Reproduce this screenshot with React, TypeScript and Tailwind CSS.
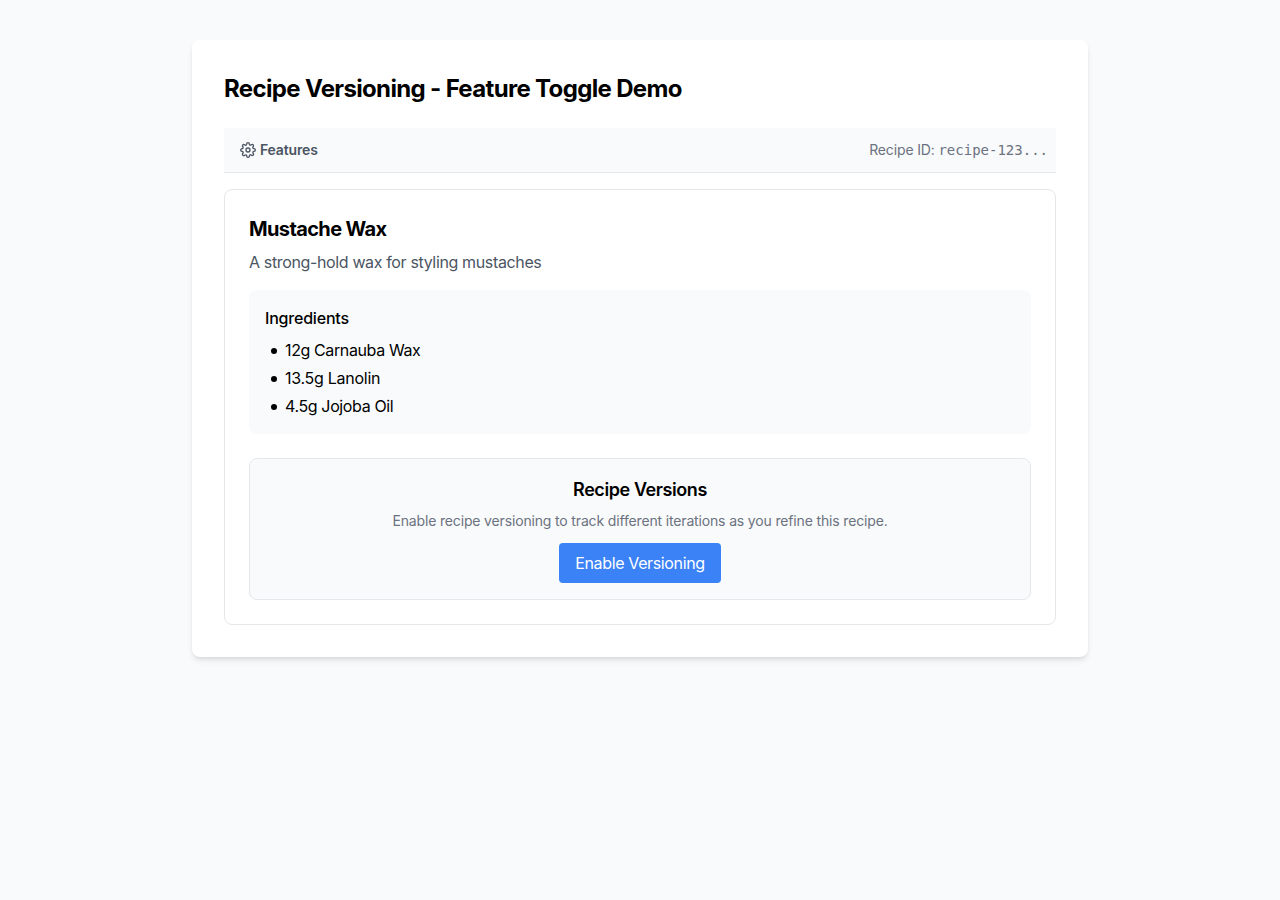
import { FiSettings } from "react-icons/fi";

const ingredients = [
  { text: "12g Carnauba Wax", tracking: "tracking-[-0.38px]" },
  { text: "13.5g Lanolin", tracking: "tracking-[-0.27px]" },
  { text: "4.5g Jojoba Oil", tracking: "tracking-[-0.37px]" },
];

export default function App() {
  return (
    <div className="min-h-screen bg-[#f9fafb] px-4 py-10 font-['Inter',sans-serif] text-black antialiased">
      <main className="mx-auto w-[896px] rounded-lg bg-white p-8 shadow-md">
        <h1 className="mb-[23px] pt-px text-2xl font-bold tracking-[-0.66px]">Recipe Versioning - Feature Toggle Demo</h1>
        <div className="mb-4 flex h-[45px] items-center justify-between border-b border-[#e5e7eb] bg-[#f9fafb] pr-2 pl-4 text-sm">
          <button className="flex items-center gap-1 font-[560] tracking-[-0.16px] text-[#4b5563]">
            <FiSettings size={16} />
            <span>Features</span>
          </button>
          <div className="text-[#6b7280]">
            <span className="tracking-[-0.15px]">Recipe ID: </span>
            <span className="font-['DejaVu_Sans_Mono',monospace]">recipe-123...</span>
          </div>
        </div>
        <section className="rounded-lg border border-[#e5e7eb] p-6">
          <h2 className="mb-[7px] pt-px text-xl font-bold tracking-[-0.63px]">Mustache Wax</h2>
          <p className="mb-4 tracking-[-0.36px] text-[#4b5563]">A strong-hold wax for styling mustaches</p>
          <div className="mb-6 rounded-lg bg-[#f9fafb] p-4">
            <h3 className="mb-2 font-medium tracking-[-0.2px]">Ingredients</h3>
            <ul className="space-y-1 pl-1.5">
              {ingredients.map(({ text, tracking }) => (
                <li key={text} className="flex items-center">
                  <span className="mt-[2px] mr-[8.25px] ml-[0.25px] h-[5.5px] w-[5.5px] rounded-full bg-black" />
                  <span className={tracking}>{text}</span>
                </li>
              ))}
            </ul>
          </div>
          <div className="rounded-lg border border-[#e5e7eb] bg-[#f9fafb] p-4 text-center">
            <h3 className="mb-[7px] pt-px text-lg font-semibold tracking-[-0.41px]">Recipe Versions</h3>
            <p className="mb-3 text-sm tracking-[-0.155px] text-[#6b7280]">
              Enable recipe versioning to track different iterations as you refine this recipe.
            </p>
            <button className="rounded bg-[#3b82f6] px-4 py-2 tracking-[-0.36px] text-white">Enable Versioning</button>
          </div>
        </section>
      </main>
    </div>
  );
}
